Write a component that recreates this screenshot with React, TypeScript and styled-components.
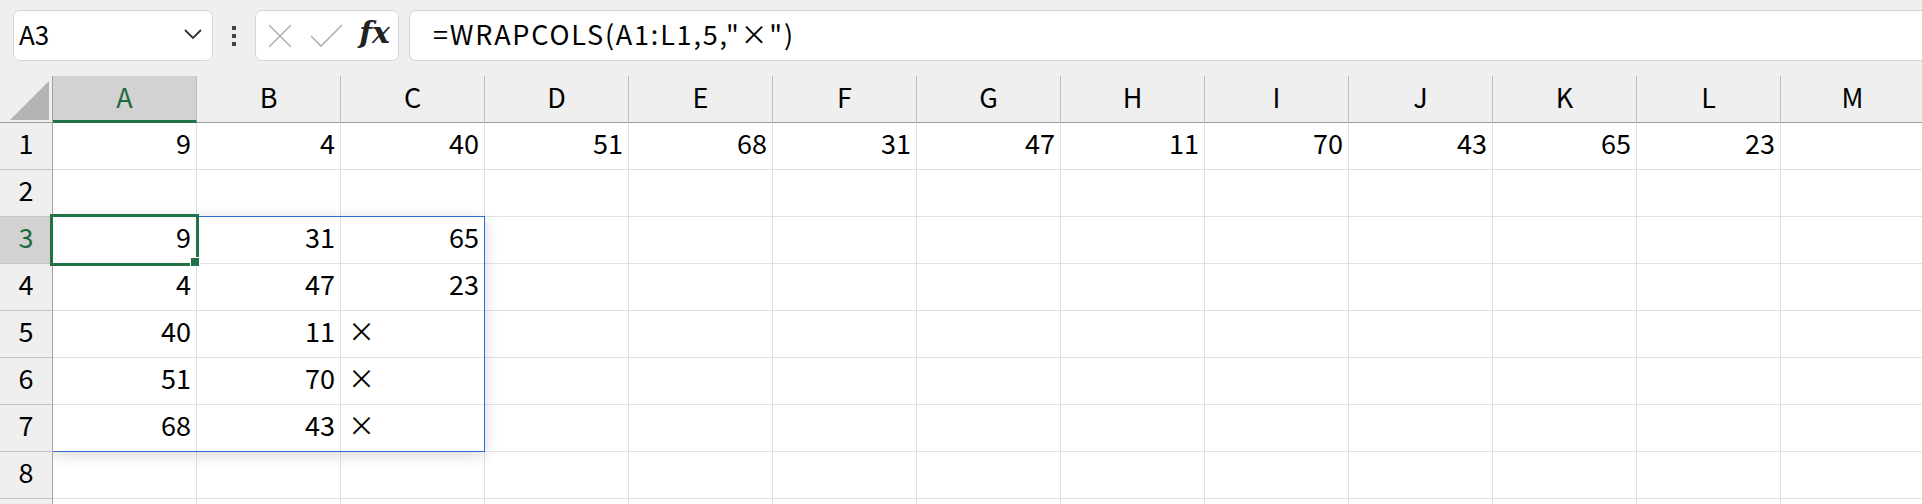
import React from "react";
import styled, { createGlobalStyle, css } from "styled-components";

const GlobalStyle = createGlobalStyle`
  html, body {
    margin: 0;
    padding: 0;
    overflow: hidden;
    background: #ffffff;
  }
  body {
    font-family: "Noto Sans CJK JP", "Noto Sans", sans-serif;
    color: #000;
  }
`;

const green = "#217346";
const blue = "#2f6cd0";

const Page = styled.div`
  width: 1922px;
  height: 504px;
  overflow: hidden;
`;

const Toolbar = styled.div`
  display: flex;
  align-items: flex-start;
  height: 76px;
  padding: 10px 0 0 13px;
  box-sizing: border-box;
  background: #efefef;
`;

const Box = styled.div`
  height: 51px;
  box-sizing: border-box;
  background: #fff;
  border: 1px solid #d6d6d6;
  border-radius: 7px;
  display: flex;
  align-items: center;
`;

const NameBox = styled(Box)`
  width: 200px;
  padding: 0 9px 3px 5px;
  justify-content: space-between;
`;

const NameText = styled.span`
  font-size: 26px;
  line-height: 1;
`;

const Grip = styled.div`
  width: 42px;
  height: 51px;
  display: flex;
  flex-direction: column;
  align-items: center;
  justify-content: center;
  gap: 4px;
`;

const Dot = styled.span`
  width: 4px;
  height: 4px;
  background: #444;
`;

const FormulaButtons = styled(Box)`
  width: 144px;
  padding: 0 8px 0 11px;
  justify-content: space-between;
  margin-right: 10px;
`;

const Fx = styled.span`
  font-family: "DejaVu Serif", "Liberation Serif", serif;
  font-style: italic;
  font-weight: bold;
  font-size: 30px;
  line-height: 1;
  color: #222;
  margin-top: -5px;
`;

const FormulaBar = styled(Box)`
  flex: 1;
  border-right: none;
  border-radius: 7px 0 0 7px;
  padding: 0 0 5px 23px;
  font-size: 27px;
  letter-spacing: 1.8px;
  line-height: 1;
`;

const Sheet = styled.div`
  position: relative;
  display: grid;
  grid-template-columns: 53px repeat(13, 144px);
  grid-auto-rows: 47px;
`;

const Cell = styled.div<{ $align?: "left" | "right" }>`
  box-sizing: border-box;
  border-right: 1px solid #e1e1e1;
  border-bottom: 1px solid #e1e1e1;
  display: flex;
  align-items: center;
  justify-content: ${({ $align }) => ($align === "left" ? "flex-start" : "flex-end")};
  padding: 0 5px 8px 7px;
  font-size: 27px;
  line-height: 1;
  white-space: nowrap;
  overflow: hidden;
`;

const HeaderBase = css<{ $active?: boolean }>`
  position: relative;
  z-index: 2;
  box-sizing: border-box;
  display: flex;
  align-items: center;
  justify-content: center;
  font-size: 27px;
  line-height: 1;
  background: ${({ $active }) => ($active ? "#d2d2d2" : "#efefef")};
  color: ${({ $active }) => ($active ? "#1f6b41" : "#000")};
`;

const ColHead = styled.div<{ $active?: boolean }>`
  ${HeaderBase};
  border-right: 1px solid #bdbdbd;
  border-bottom: ${({ $active }) =>
    $active ? `3px solid ${green}` : "1px solid #9f9f9f"};
  padding-bottom: ${({ $active }) => ($active ? "3px" : "5px")};
`;

const RowHead = styled.div<{ $active?: boolean }>`
  ${HeaderBase};
  border-right: 1px solid #a3a3a3;
  border-bottom: 1px solid #c4c4c4;
  padding-bottom: 8px;
`;

const Corner = styled.div`
  position: relative;
  z-index: 2;
  box-sizing: border-box;
  background: #efefef;
  border-right: 1px solid #a3a3a3;
  border-bottom: 1px solid #9f9f9f;
  display: flex;
  align-items: flex-end;
  justify-content: flex-end;
  padding: 0 3px 2px 0;
`;

const Triangle = styled.div`
  width: 39px;
  height: 39px;
  background: #b4b4b4;
  clip-path: polygon(100% 0, 100% 100%, 0 100%);
`;

const SpillRange = styled.div`
  position: absolute;
  z-index: 1;
  left: 52px;
  top: 140px;
  width: 433px;
  height: 236px;
  box-sizing: border-box;
  border: 1px solid ${blue};
  box-shadow: 0 3px 14px rgba(0, 0, 0, 0.16);
  pointer-events: none;
`;

const Selection = styled.div`
  position: absolute;
  z-index: 3;
  left: 50px;
  top: 138px;
  width: 149px;
  height: 52px;
  box-sizing: border-box;
  border: 3px solid ${green};
`;

const FillHandle = styled.div`
  position: absolute;
  z-index: 4;
  left: 190px;
  top: 181px;
  width: 10px;
  height: 10px;
  box-sizing: border-box;
  background: ${green};
  border: 1px solid #fff;
`;

const columns = ["A", "B", "C", "D", "E", "F", "G", "H", "I", "J", "K", "L", "M"];

const data: Record<number, (string | number)[]> = {
  1: [9, 4, 40, 51, 68, 31, 47, 11, 70, 43, 65, 23],
  3: [9, 31, 65],
  4: [4, 47, 23],
  5: [40, 11, "×"],
  6: [51, 70, "×"],
  7: [68, 43, "×"],
};

// row 9 is only a sliver at the bottom edge, its number is out of view
const rows = [1, 2, 3, 4, 5, 6, 7, 8, 9];

const Chevron = () => (
  <svg width="20" height="12" viewBox="0 0 20 12">
    <path d="M2 2 L10 10 L18 2" fill="none" stroke="#333" strokeWidth="1.8" />
  </svg>
);

const CancelIcon = () => (
  <svg width="26" height="26" viewBox="0 0 26 26">
    <path d="M2 2 L24 24 M24 2 L2 24" fill="none" stroke="#b2b2b2" strokeWidth="1.6" />
  </svg>
);

const EnterIcon = () => (
  <svg width="33" height="24" viewBox="0 0 33 24">
    <path d="M1 12 L11 22 L32 1" fill="none" stroke="#b2b2b2" strokeWidth="1.6" />
  </svg>
);

const App = () => {
  return (
    <Page>
      <GlobalStyle />
      <Toolbar>
        <NameBox>
          <NameText>A3</NameText>
          <Chevron />
        </NameBox>
        <Grip>
          <Dot />
          <Dot />
          <Dot />
        </Grip>
        <FormulaButtons>
          <CancelIcon />
          <EnterIcon />
          <Fx>fx</Fx>
        </FormulaButtons>
        <FormulaBar>=WRAPCOLS(A1:L1,5,"×")</FormulaBar>
      </Toolbar>
      <Sheet>
        <Corner>
          <Triangle />
        </Corner>
        {columns.map(c => (
          <ColHead key={c} $active={c === "A"}>
            {c}
          </ColHead>
        ))}
        {rows.map(r => (
          <React.Fragment key={r}>
            <RowHead $active={r === 3}>{r < 9 ? r : null}</RowHead>
            {columns.map((c, i) => {
              const v = data[r]?.[i];
              return (
                <Cell key={c} $align={typeof v === "string" ? "left" : "right"}>
                  {v}
                </Cell>
              );
            })}
          </React.Fragment>
        ))}
        <SpillRange />
        <Selection />
        <FillHandle />
      </Sheet>
    </Page>
  );
};

export default App;
